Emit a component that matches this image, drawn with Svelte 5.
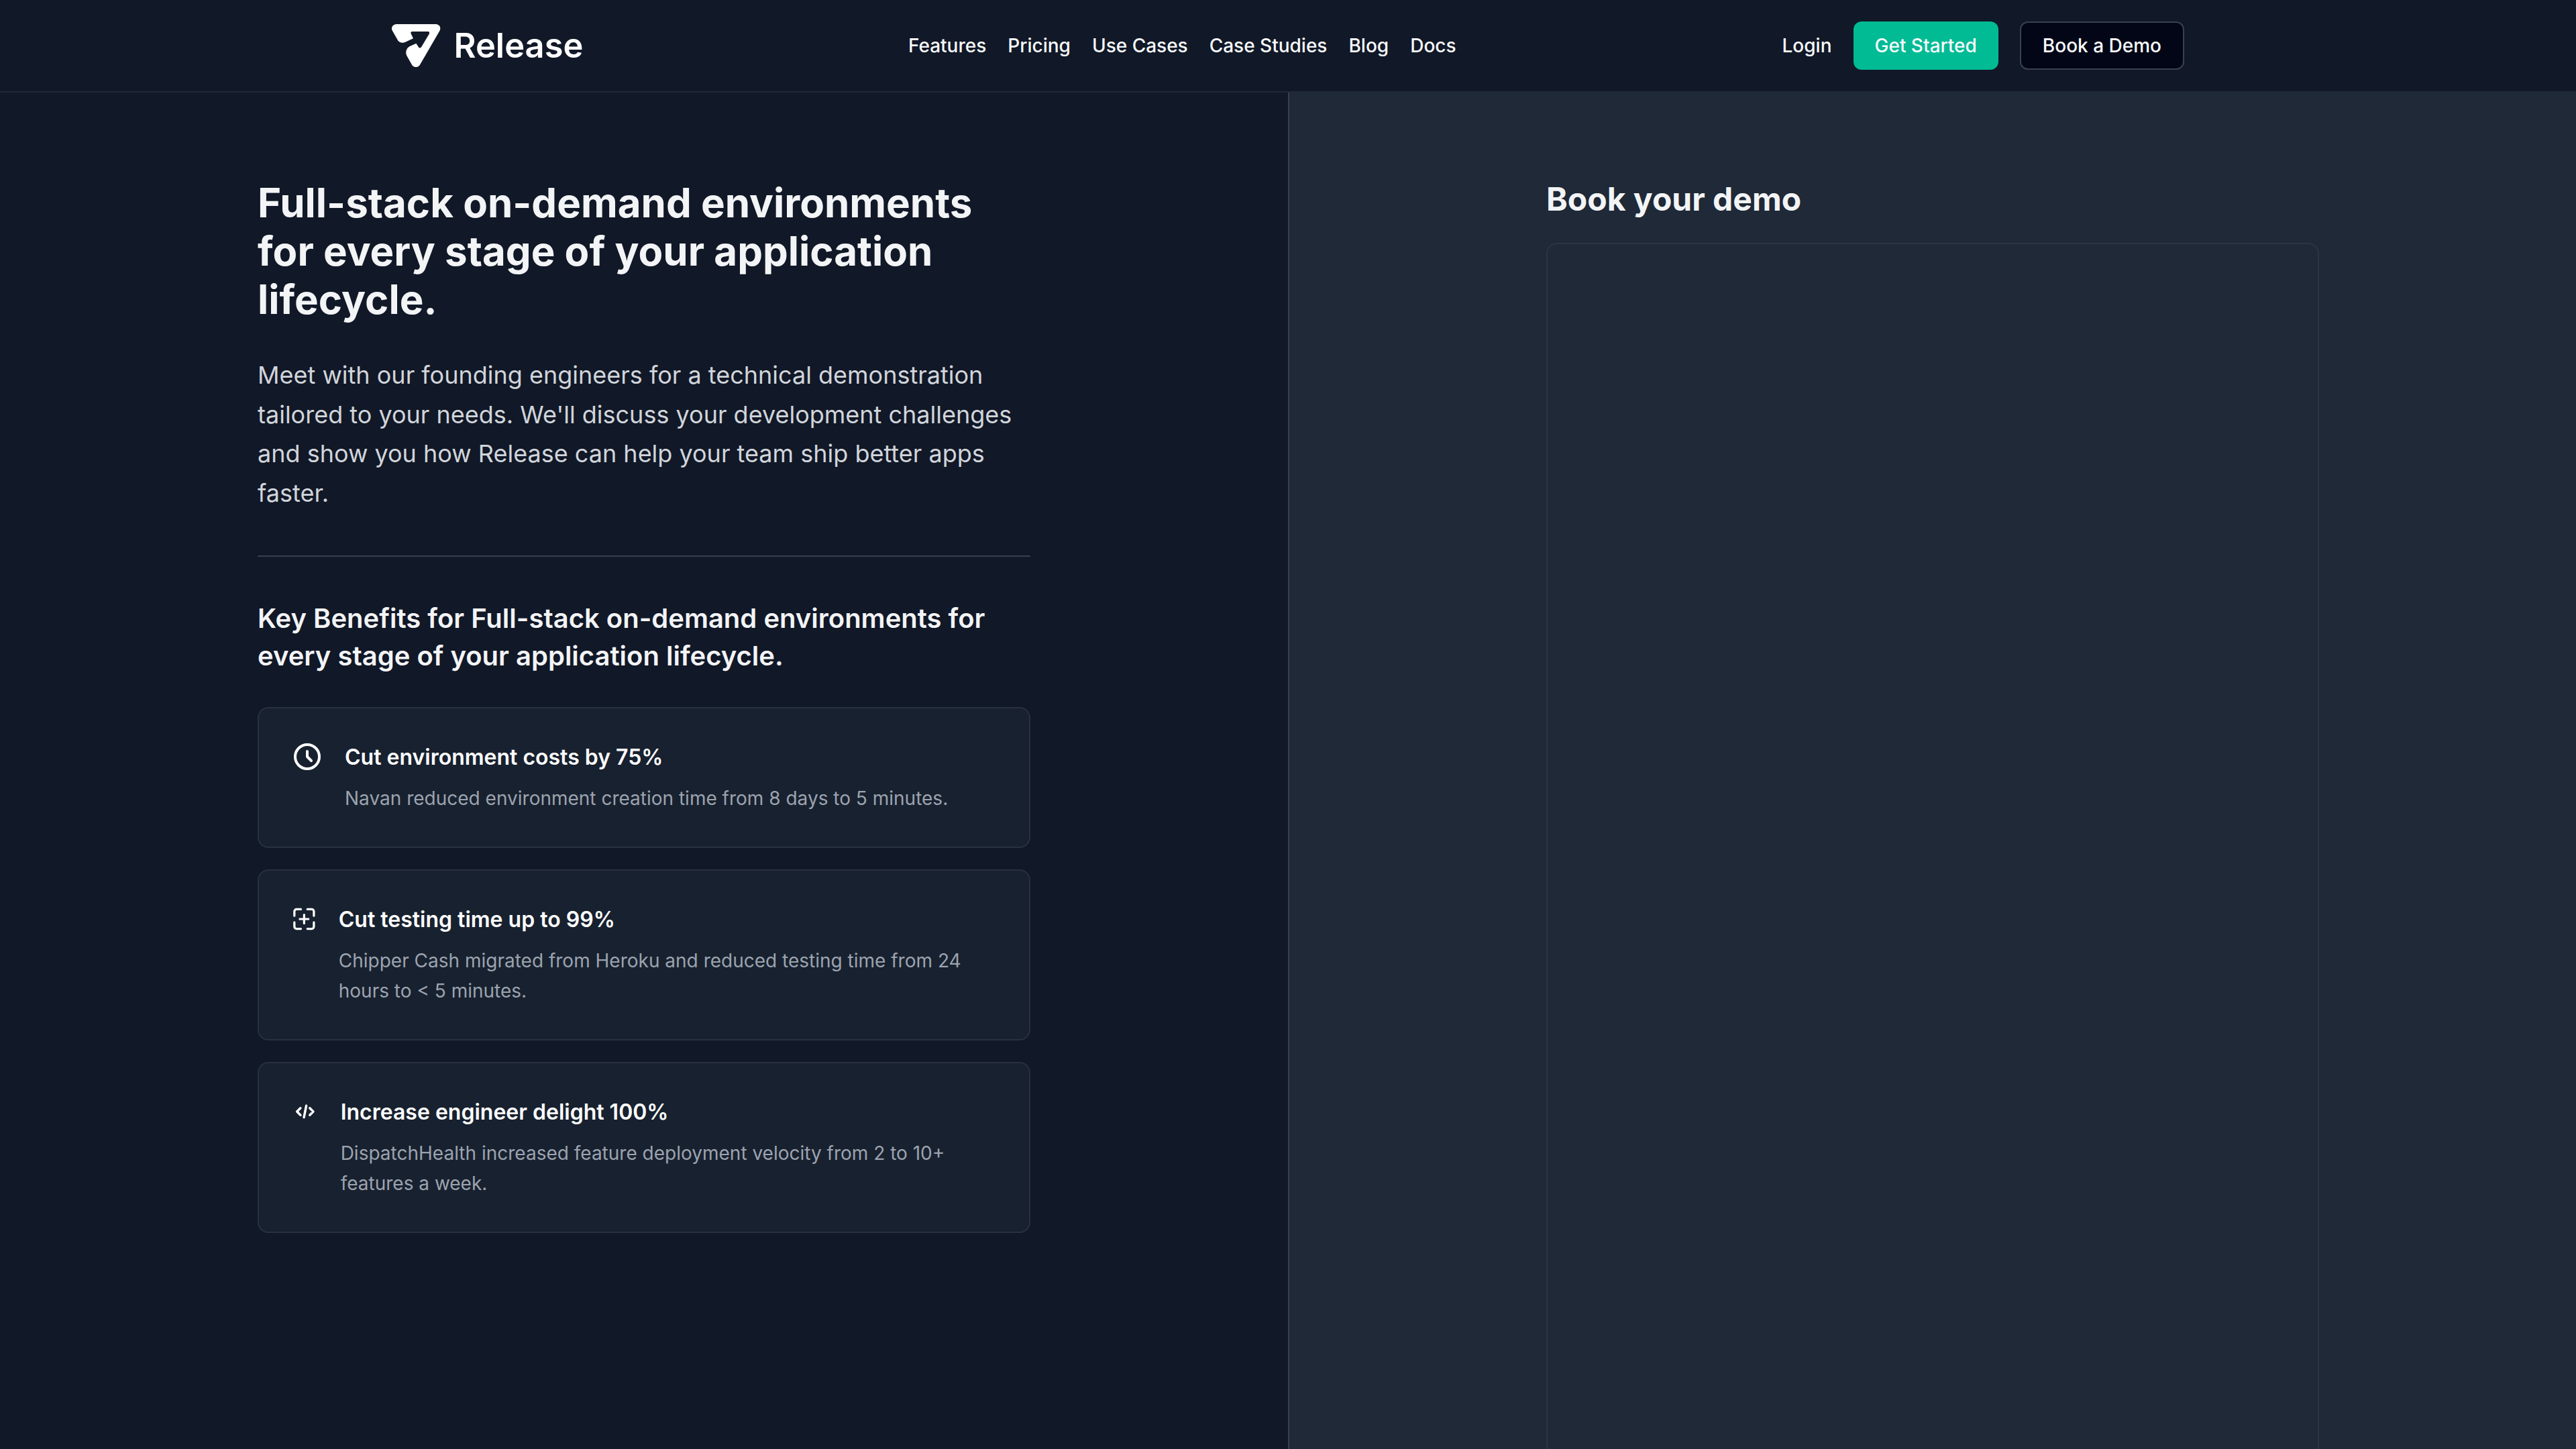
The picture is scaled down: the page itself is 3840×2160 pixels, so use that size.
<script lang="ts">
    const navLinks = ["Features", "Pricing", "Use Cases", "Case Studies", "Blog", "Docs"];

    const benefits = [
        {
            icon: "M12 8v4l3 3m6-3a9 9 0 1 1-18 0 9 9 0 0 1 18 0z",
            title: "Cut environment costs by 75%",
            text: "Navan reduced environment creation time from 8 days to 5 minutes.",
        },
        {
            icon: "M9 3H5a2 2 0 0 0-2 2v4M15 3h4a2 2 0 0 1 2 2v4M9 21H5a2 2 0 0 1-2-2v-4M15 21h4a2 2 0 0 0 2-2v-4M12 8v8M8 12h8",
            title: "Cut testing time up to 99%",
            text: "Chipper Cash migrated from Heroku and reduced testing time from 24 hours to < 5 minutes.",
        },
        {
            icon: "M8 9l-3 3 3 3M16 9l3 3-3 3M13 7l-2 10",
            title: "Increase engineer delight 100%",
            text: "DispatchHealth increased feature deployment velocity from 2 to 10+ features a week.",
        },
    ];
</script>

<div class="page">
    <header>
        <div class="bar">
            <a class="logo" href="#home" aria-label="Release">
                <svg width="284" height="64" viewBox="0 0 284 64">
                    <path
                        transform="translate(-24 -36) scale(0.33333)"
                        d="M94 108H268C286 108 294 124 286 138L199 288C192 304 168 304 161 288L139 249C132 234 137 216 151 208L181 194L193 212C196 216 201 215 204 211L239 152C242 146 240 141 234 141H164C158 141 155 146 158 151L168 172L131 189C119 194 106 191 99 180L75 138C67 124 76 108 94 108Z"
                    />
                    <text x="92.5" y="50" textLength="193" lengthAdjust="spacingAndGlyphs">Release</text>
                </svg>
            </a>
            <nav>
                {#each navLinks as link (link)}
                    <a href="#{link}">{link}</a>
                {/each}
            </nav>
            <div class="actions">
                <a href="#login">Login</a>
                <a class="btn primary" href="#start">Get Started</a>
                <a class="btn outline" href="#demo">Book a Demo</a>
            </div>
        </div>
    </header>

    <main>
        <section class="intro">
            <h1>Full-stack on-demand environments for every stage of your application lifecycle.</h1>
            <p class="lead">
                Meet with our founding engineers for a technical demonstration tailored to your needs.
                We'll discuss your development challenges and show you how Release can help your team
                ship better apps faster.
            </p>
            <div class="benefits">
                <h2>Key Benefits for Full-stack on-demand environments for every stage of your application lifecycle.</h2>
                {#each benefits as benefit (benefit.title)}
                    <div class="card">
                        <svg class="icon" width="48" height="48" viewBox="0 0 24 24">
                            <path d={benefit.icon} />
                        </svg>
                        <div class="card-body">
                            <h3>{benefit.title}</h3>
                            <p>{benefit.text}</p>
                        </div>
                    </div>
                {/each}
            </div>
        </section>

        <section class="booking">
            <h2>Book your demo</h2>
            <div class="calendar"></div>
        </section>
    </main>
</div>

<style>
    :global(body) {
        background: #111827;
    }

    .page {
        display: flex;
        flex-direction: column;
        height: 2160px;
        overflow: hidden;
        background: #111827;
        color: #f3f4f6;
        font-family: Inter, sans-serif;
    }

    .page * {
        box-sizing: border-box;
    }

    h1,
    h2,
    h3,
    p {
        margin: 0;
    }

    a {
        color: #f8fafc;
        text-decoration: none;
    }

    header {
        flex: none;
        height: 138px;
        border-bottom: 2px solid #1f2937;
    }

    .bar {
        display: flex;
        align-items: center;
        justify-content: space-between;
        width: 2672px;
        height: 100%;
        margin: 0 auto;
        font-size: 28px;
        font-weight: 500;
        line-height: 40px;
    }

    .logo svg {
        display: block;
        overflow: visible;
        fill: #fff;
    }

    .logo text {
        font-size: 51px;
        font-weight: 600;
    }

    nav,
    .actions {
        display: flex;
        align-items: center;
        gap: 32px;
    }

    .btn {
        display: flex;
        align-items: center;
        height: 72px;
        padding: 0 32px;
        border-radius: 12px;
    }

    .primary {
        background: #00bb94;
    }

    .outline {
        background: #020617;
        border: 2px solid #374151;
    }

    main {
        flex: 1;
        display: grid;
        grid-template-columns: 1fr 1fr;
        min-height: 0;
    }

    .intro {
        padding: 128px 384px 0;
    }

    h1 {
        font-size: 60px;
        font-weight: 700;
        line-height: 72px;
    }

    .lead {
        margin-top: 48px;
        color: #d1d5db;
        font-size: 36px;
        line-height: 58.5px;
    }

    .benefits {
        display: flex;
        flex-direction: column;
        gap: 32px;
        margin-top: 64px;
        padding-top: 64px;
        border-top: 2px solid #374151;
    }

    .benefits h2 {
        margin-bottom: 16px;
        font-size: 40px;
        font-weight: 600;
        line-height: 56px;
    }

    .card {
        display: flex;
        align-items: flex-start;
        padding: 48px;
        background: rgba(31, 41, 55, 0.5);
        border: 2px solid rgba(55, 65, 81, 0.5);
        border-radius: 16px;
    }

    .icon {
        margin-right: 32px;
        fill: none;
        stroke: #fff;
        stroke-width: 2;
        stroke-linecap: round;
        stroke-linejoin: round;
    }

    h3 {
        margin-bottom: 14px;
        color: #fff;
        font-size: 32px;
        font-weight: 600;
        line-height: 50px;
    }

    .card p {
        color: #9ca3af;
        font-size: 28px;
        line-height: 45.5px;
    }

    .booking {
        display: flex;
        flex-direction: column;
        align-items: center;
        padding-top: 128px;
        background: #1f2937;
        border-left: 2px solid #374151;
    }

    .booking h2 {
        width: 1152px;
        margin-bottom: 35px;
        font-size: 48px;
        font-weight: 700;
        line-height: 61px;
    }

    .calendar {
        flex: none;
        width: 1152px;
        height: 2000px;
        border: 2px solid rgba(55, 65, 81, 0.5);
        border-radius: 16px;
    }
</style>
